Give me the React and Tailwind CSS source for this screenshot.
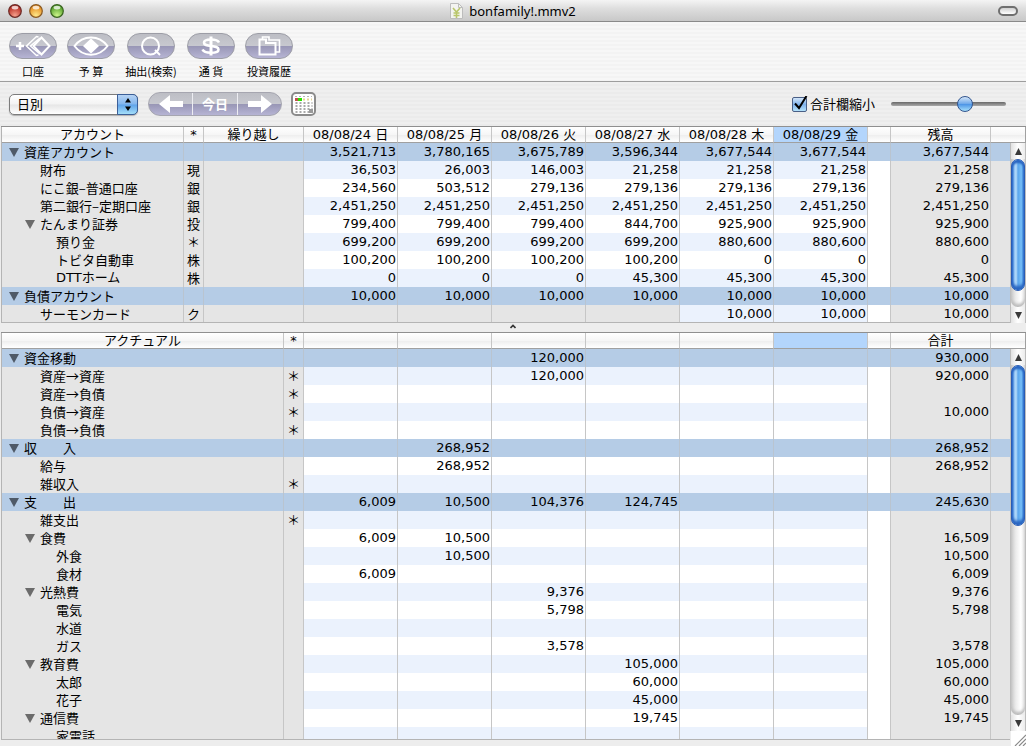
import React from 'react';

const JP = "font-['Noto_Sans_CJK_JP',sans-serif]";
const NUM = "font-['DejaVu_Sans','Noto_Sans_CJK_JP',sans-serif]";

const DATES = ['08/08/24 日', '08/08/25 月', '08/08/26 火', '08/08/27 水', '08/08/28 木', '08/08/29 金'];

const same = (v) => [v, v, v, v, v, v];

const ACCOUNTS = [
  { name: '資産アカウント', level: 0, head: true, v: ['3,521,713', '3,780,165', '3,675,789', '3,596,344', '3,677,544', '3,677,544'], total: '3,677,544' },
  { name: '財布', level: 1, mark: '現', v: ['36,503', '26,003', '146,003', '21,258', '21,258', '21,258'], total: '21,258' },
  { name: 'にこ銀–普通口座', level: 1, mark: '銀', v: ['234,560', '503,512', '279,136', '279,136', '279,136', '279,136'], total: '279,136' },
  { name: '第二銀行–定期口座', level: 1, mark: '銀', v: same('2,451,250'), total: '2,451,250' },
  { name: 'たんまり証券', level: 1, open: true, mark: '投', v: ['799,400', '799,400', '799,400', '844,700', '925,900', '925,900'], total: '925,900' },
  { name: '預り金', level: 2, mark: '＊', v: ['699,200', '699,200', '699,200', '699,200', '880,600', '880,600'], total: '880,600' },
  { name: 'トビタ自動車', level: 2, mark: '株', v: ['100,200', '100,200', '100,200', '100,200', '0', '0'], total: '0' },
  { name: 'DTTホーム', level: 2, mark: '株', latin: true, v: ['0', '0', '0', '45,300', '45,300', '45,300'], total: '45,300' },
  { name: '負債アカウント', level: 0, head: true, v: same('10,000'), total: '10,000' },
  { name: 'サーモンカード', level: 1, mark: 'ク', v: [null, null, null, null, '10,000', '10,000'], total: '10,000' },
];

const ACTUALS = [
  { name: '資金移動', level: 0, head: true, v: ['', '', '120,000', '', '', ''], total: '930,000' },
  { name: '資産→資産', level: 1, mark: '＊', v: ['', '', '120,000', '', '', ''], total: '920,000' },
  { name: '資産→負債', level: 1, mark: '＊', v: same(''), total: '' },
  { name: '負債→資産', level: 1, mark: '＊', v: same(''), total: '10,000' },
  { name: '負債→負債', level: 1, mark: '＊', v: same(''), total: '' },
  { name: '収\u3000\u3000入', level: 0, head: true, v: ['', '268,952', '', '', '', ''], total: '268,952' },
  { name: '給与', level: 1, v: ['', '268,952', '', '', '', ''], total: '268,952' },
  { name: '雑収入', level: 1, mark: '＊', v: same(''), total: '' },
  { name: '支\u3000\u3000出', level: 0, head: true, v: ['6,009', '10,500', '104,376', '124,745', '', ''], total: '245,630' },
  { name: '雑支出', level: 1, mark: '＊', v: same(''), total: '' },
  { name: '食費', level: 1, open: true, v: ['6,009', '10,500', '', '', '', ''], total: '16,509' },
  { name: '外食', level: 2, v: ['', '10,500', '', '', '', ''], total: '10,500' },
  { name: '食材', level: 2, v: ['6,009', '', '', '', '', ''], total: '6,009' },
  { name: '光熱費', level: 1, open: true, v: ['', '', '9,376', '', '', ''], total: '9,376' },
  { name: '電気', level: 2, v: ['', '', '5,798', '', '', ''], total: '5,798' },
  { name: '水道', level: 2, v: same(''), total: '' },
  { name: 'ガス', level: 2, v: ['', '', '3,578', '', '', ''], total: '3,578' },
  { name: '教育費', level: 1, open: true, v: ['', '', '', '105,000', '', ''], total: '105,000' },
  { name: '太郎', level: 2, v: ['', '', '', '60,000', '', ''], total: '60,000' },
  { name: '花子', level: 2, v: ['', '', '', '45,000', '', ''], total: '45,000' },
  { name: '通信費', level: 1, open: true, v: ['', '', '', '19,745', '', ''], total: '19,745' },
  { name: '家電話', level: 2, v: same(''), total: '' },
];

const INDENT = ['pl-[6px]', 'pl-[22px]', 'pl-[38px]'];
const CAP = 'bg-[linear-gradient(#ffffff,#f6f6f6_50%,#ededed_52%,#ffffff)]';
const LINE = 'border-r border-r-[#c6c6c6]';

function HeadCell({ children, on, end }) {
  return (
    <th
      scope="col"
      className={`h-4 whitespace-nowrap border-b border-b-[#a0a0a0] p-0 text-center font-normal leading-[15px] ${on ? 'bg-[#b3d5fc]' : CAP} ${end ? '' : LINE} ${NUM}`}
    >
      {children}
    </th>
  );
}

function Row({ row, index, carry }) {
  const line = row.head ? 'border-r border-r-[#b9c4d0]' : LINE;
  const side = row.head ? 'bg-[#b5cce6]' : 'bg-[#e5e5e5]';
  const cell = row.head ? 'bg-[#b5cce6]' : index % 2 ? 'bg-[#ebf2fd]' : 'bg-white';
  const fold = row.head || row.open;
  const num = `h-[18px] whitespace-nowrap p-0 pr-px text-right leading-[18px] ${NUM}`;
  return (
    <tr>
      <th scope="row" className={`h-[18px] p-0 text-left font-normal ${line} ${side}`}>
        <div className={`flex h-[18px] items-center whitespace-nowrap leading-[18px] ${row.latin ? NUM : JP} ${INDENT[row.level]}`}>
          <span className="flex w-4 shrink-0">
            {fold && (
              <button type="button" aria-label={`${row.name}を閉じる`} className="flex h-3 w-3 items-center justify-center">
                <svg width="10" height="10" viewBox="0 0 10 10" className={row.head ? 'fill-[#4f5a68]' : 'fill-[#6b6b6b]'}>
                  <path d="M0 1h10L5 10z" />
                </svg>
              </button>
            )}
          </span>
          {row.name}
        </div>
      </th>
      <td className={`h-[18px] p-0 text-center leading-[18px] ${line} ${side} ${JP}`}>{row.mark}</td>
      {carry && <td className={`${line} ${side}`} />}
      {row.v.map((v, i) => (
        <td key={i} className={`${num} ${line} ${v === null ? side : cell}`}>{v}</td>
      ))}
      <td className={`${line} ${row.head ? side : 'bg-white'}`} />
      <td className={`${num} ${line} ${side}`}>{row.total}</td>
      <td className={side} />
    </tr>
  );
}

function Ledger({ title, rows, dates, carry, total }) {
  return (
    <table className="w-full table-fixed border-separate border-spacing-0 text-[13px]">
      <colgroup>
        <col />
        <col className="w-5" />
        {carry && <col className="w-[100px]" />}
        {dates.map((_, i) => <col key={i} className="w-[94px]" />)}
        <col className="w-[23px]" />
        <col className="w-[100px]" />
        <col className="w-[19px]" />
      </colgroup>
      <thead>
        <tr>
          <HeadCell>{title}</HeadCell>
          <HeadCell>*</HeadCell>
          {carry && <HeadCell>繰り越し</HeadCell>}
          {dates.map((d, i) => <HeadCell key={i} on={i === 5}>{d}</HeadCell>)}
          <HeadCell />
          <HeadCell>{total}</HeadCell>
          <HeadCell end />
        </tr>
      </thead>
      <tbody>
        {rows.map((r, i) => <Row key={i} row={r} index={i} carry={carry} />)}
      </tbody>
    </table>
  );
}

function ArrowButton({ up }) {
  return (
    <button type="button" aria-label={up ? '上へ' : '下へ'} className="flex h-4 w-full shrink-0 items-center justify-center bg-[linear-gradient(90deg,#e2e2e2,#ffffff_50%,#ececec)]">
      <svg width="7" height="7" viewBox="0 0 7 7" className="fill-[#3a3a3a]">
        <path d={up ? 'M0 7h7L3.500 0z' : 'M0 0h7L3.500 7z'} />
      </svg>
    </button>
  );
}

function ScrollColumn({ thumb, className }) {
  return (
    <div className={`flex w-4 shrink-0 flex-col ${className}`}>
      <div className={`h-4 shrink-0 border-b border-r border-b-[#a0a0a0] border-r-[#a0a0a0] ${CAP}`} />
      <div className="flex min-h-0 flex-1 flex-col border-x border-x-[#bdbdbd]">
        <ArrowButton up />
        <div className="flex min-h-0 flex-1 flex-col rounded-b-full bg-[linear-gradient(90deg,#c9c9c9,#ececec_35%,#ffffff_70%,#e4e4e4)] shadow-[inset_0_-3px_3px_#bdbdbd]">
          <div className={`w-full rounded-full border border-[#2a5cb4] bg-[linear-gradient(90deg,#2f6fd4,#9fcdf7_22%,#b4dafa_34%,#5ba5ec_50%,#78c0f7_78%,#3a80da)] shadow-[inset_0_3px_2px_#2a66c2,inset_0_-4px_3px_#2a66c2] ${thumb}`} />
        </div>
        <ArrowButton />
      </div>
    </div>
  );
}

function ToolItem({ label, width, children }) {
  return (
    <button type="button" className={`flex flex-col items-center ${width}`}>
      <span className="flex h-[26px] w-12 rounded-[13px] border border-[#9c9da6] bg-[linear-gradient(#bdbec5,#c7c8cf_48%,#9997b6_52%,#b6b4d4)]">
        <svg width="46" height="24" viewBox="1 1 46 24" fill="none" stroke="#fff" strokeWidth="2">
          {children}
        </svg>
      </span>
      <span className={`mt-1 whitespace-pre text-[11px] leading-4 ${JP}`}>{label}</span>
    </button>
  );
}

function Light({ id, from, to, ring, label }) {
  return (
    <button type="button" aria-label={label} className="flex">
      <svg width="14" height="14" viewBox="0 0 14 14">
        <defs>
          <radialGradient id={id} cx="50%" cy="85%" r="75%">
            <stop offset="0" stopColor={from} />
            <stop offset="1" stopColor={to} />
          </radialGradient>
        </defs>
        <circle cx="7" cy="7" r="6.300" fill={`url(#${id})`} stroke={ring} strokeWidth="1.200" />
        <ellipse cx="7" cy="3.600" rx="3.400" ry="1.900" fill="#fff" opacity=".75" />
      </svg>
    </button>
  );
}

export default function App() {
  return (
    <div className={`relative flex h-screen flex-col overflow-hidden bg-[#ededed] text-black ${JP}`}>
      <header className="grid h-[22px] shrink-0 grid-cols-[1fr_auto_1fr] items-center border-b border-[#8a8a8a] bg-[linear-gradient(#f4f4f4,#dedede_40%,#c8c8c8)] px-2">
        <div className="flex gap-[7px]">
          <Light id="l1" label="閉じる" from="#f5a08c" to="#b5251c" ring="#6b2a26" />
          <Light id="l2" label="しまう" from="#ffe98a" to="#e58a1c" ring="#8a5a22" />
          <Light id="l3" label="拡大" from="#cdf58a" to="#4d9b26" ring="#3a6420" />
        </div>
        <h1 className="flex items-center gap-[6px] font-['Noto_Sans',sans-serif] text-[13px] leading-5">
          <svg width="13" height="16" viewBox="0 0 13 16">
            <path d="M.5.5h8l4 4v11H.5z" fill="#f3f3f0" stroke="#bcbcbc" />
            <path d="M8.500.5v4h4" fill="none" stroke="#bcbcbc" />
            <path d="M3 5l3.500 4L10 5M6.500 9v6M3.500 10h6M3.500 12.500h6" fill="none" stroke="#b9c66a" strokeWidth="1.600" />
          </svg>
          bonfamily!.mmv2
        </h1>
        <button type="button" aria-label="ツールバーを隠す" className="h-[10px] w-5 justify-self-end rounded-full border-2 border-[#6f6f6f] bg-[linear-gradient(#d0d0d0,#ffffff)]" />
      </header>

      <nav className="flex h-[60px] shrink-0 items-start gap-[10px] border-b border-[#9d9d9d] bg-[repeating-linear-gradient(#f7f7f7_0_2px,#f3f3f3_2px_4px)] pl-[9px] pt-[11px]">
        <ToolItem label="口座" width="w-12">
          <path d="M7 13h8M11 9v8" strokeWidth="2.500" />
          <path d="M32.500 4.500l8 8.500-8 8.500-8-8.500z" />
          <path d="M29.500 4l-2-.5L17.500 13l10 9.500 2-.5M31 5l-9.500 8 9.500 8" strokeWidth="1.500" />
        </ToolItem>
        <ToolItem label="予 算" width="w-12">
          <path d="M7.500 13C16 1.500 32 1.500 40.500 13 32 24.500 16 24.500 7.500 13z" />
          <path d="M24 5.500l8 7.500-8 7.500-8-7.500z" fill="#fff" stroke="none" />
        </ToolItem>
        <ToolItem label="抽出(検索)" width="w-[52px]">
          <circle cx="23.500" cy="13" r="8.500" />
          <path d="M28 17l5 5" />
        </ToolItem>
        <ToolItem label="通 貨" width="w-12">
          <path d="M32 9.500C31 7.500 28 6.500 24 6.500c-4.500 0-7 1-7 3.200s2.500 2.700 7 3.300 7.500 1.100 7.500 3.500-3 3.300-7.500 3.300c-4.500 0-7.500-1-8.500-3.300" strokeWidth="2.600" />
          <path d="M24 3.500v19" strokeWidth="3" />
        </ToolItem>
        <ToolItem label="投資履歴" width="w-12">
          <path d="M14.500 21.500V6.500h6.500v3.500h9.500v11.500z" />
          <path d="M17.500 6V4h6.500v3h10.500v12h-3.500" strokeWidth="1.600" />
        </ToolItem>
      </nav>

      <div className="flex h-11 shrink-0 items-center justify-between bg-[repeating-linear-gradient(#efefef_0_2px,#ebebeb_2px_4px)] pl-[9px] pr-5">
        <div className="flex items-center">
          <div className="relative flex h-[21px] w-[129px]">
            <select aria-label="表示単位" defaultValue="day" className={`h-full w-full appearance-none rounded-[5px] border border-[#7c7c7c] bg-[linear-gradient(#ffffff,#f3f3f3_48%,#e6e6e6_52%,#ffffff)] pl-[7px] pr-6 text-[13px] leading-[18px] shadow-[0_1px_1px_#b0b0b0] ${JP}`}>
              <option value="day">日別</option>
              <option value="week">週別</option>
              <option value="month">月別</option>
            </select>
            <span className="pointer-events-none absolute inset-y-0 right-0 flex w-[21px] items-center justify-center rounded-r-[5px] border border-[#3c5f98] bg-[linear-gradient(#b6d3f4,#83b6ee_48%,#5fa3ea_52%,#a4def9)]">
              <svg width="6" height="13" viewBox="0 0 6 13"><path d="M0 4.500h6L3 0zM0 8.500h6L3 13z" /></svg>
            </span>
          </div>
          <div className="ml-[10px] flex h-6 w-[134px] overflow-hidden rounded-full border border-[#a6a6b0] bg-[linear-gradient(#bdbec5,#c7c8cf_48%,#9997b6_52%,#b6b4d4)]">
            <button type="button" aria-label="前へ" className="flex flex-1 items-center justify-center">
              <svg width="24" height="18" viewBox="0 0 24 18" fill="#fff"><path d="M0 9L11 0v6h13v6H11v6z" /></svg>
            </button>
            <button type="button" className="w-[46px] border-x border-[#ededf2] text-[13px] font-bold leading-[22px] text-white">今日</button>
            <button type="button" aria-label="次へ" className="flex flex-1 items-center justify-center">
              <svg width="24" height="18" viewBox="0 0 24 18" fill="#fff"><path d="M24 9L13 0v6H0v6h13v6z" /></svg>
            </button>
          </div>
          <button type="button" aria-label="カレンダー" className="ml-[9px] flex h-6 w-[25px] items-center justify-center rounded-[5px] border-2 border-[#8b8b8b] bg-white">
            <svg width="19" height="18" viewBox="0 0 19 18">
              <path d="M1 1.500h17" stroke="#b5b5b5" strokeDasharray="2 2" />
              <rect x="1" y="3" width="3" height="3" fill="#c0504d" />
              <rect x="4" y="3" width="4" height="3" fill="#2be000" />
              <path d="M9 4.500h9" stroke="#e6d690" strokeWidth="2" strokeDasharray="2 2" />
              <path d="M1.500 8h17M1.500 11h17M1.500 14h17M1.500 17h17" stroke="#8d8d8d" strokeWidth="1.600" strokeDasharray="2 2" />
              <rect x="15" y="14" width="4" height="4" fill="#9a9a9a" />
            </svg>
          </button>
        </div>
        <div className="flex items-center">
          <span className="relative flex h-[15px] w-[15px]">
            <input id="compact" type="checkbox" defaultChecked className="peer h-[15px] w-[15px] appearance-none rounded-[2px] border border-[#4a5f86] bg-[linear-gradient(#d3e6fa,#7fb2ec_50%,#b4e2fb)]" />
            <svg width="16" height="16" viewBox="0 0 16 16" className="pointer-events-none absolute -top-px left-0 hidden fill-none stroke-black stroke-2 peer-checked:block">
              <path d="M3 7.500l4 4.500L14.500 0" />
            </svg>
          </span>
          <label htmlFor="compact" className="ml-[3px] text-[13px] leading-4">合計欄縮小</label>
          <input
            type="range"
            aria-label="列の幅"
            defaultValue="67"
            className="ml-4 h-4 w-[115px] appearance-none bg-transparent [&::-webkit-slider-runnable-track]:h-1 [&::-webkit-slider-runnable-track]:rounded-full [&::-webkit-slider-runnable-track]:bg-[linear-gradient(#686868,#a9a9a9)] [&::-webkit-slider-thumb]:-mt-[6px] [&::-webkit-slider-thumb]:h-4 [&::-webkit-slider-thumb]:w-4 [&::-webkit-slider-thumb]:appearance-none [&::-webkit-slider-thumb]:rounded-full [&::-webkit-slider-thumb]:border [&::-webkit-slider-thumb]:border-[#33568f] [&::-webkit-slider-thumb]:bg-[linear-gradient(#d5e6f8,#6fa9ea_48%,#4c94e6_52%,#a6e0fb)]"
          />
        </div>
      </div>

      <section className="ml-px flex h-[197px] shrink-0 border-t border-[#8f8f8f]">
        <div className="min-w-0 flex-1 overflow-hidden border-b border-l border-[#b4b4b4]">
          <Ledger title="アカウント" rows={ACCOUNTS} dates={DATES} carry total="残高" />
        </div>
        <ScrollColumn thumb="h-[89%]" className="" />
      </section>

      <div className="flex h-[9px] shrink-0 justify-center">
        <svg width="6" height="9" viewBox="0 0 6 9"><path d="M.5 5L3 2.500 5.500 5" fill="none" stroke="#333" strokeWidth="1.600" /></svg>
      </div>

      <section className="ml-px flex min-h-0 flex-1 border-t border-[#8f8f8f]">
        <div className="min-w-0 flex-1 overflow-hidden border-b border-l border-[#b4b4b4]">
          <Ledger title="アクチュアル" rows={ACTUALS} dates={same('')} total="合計" />
        </div>
        <ScrollColumn thumb="h-[46%]" className="mb-[9px]" />
      </section>

      <footer className="h-[6px] shrink-0" />
      <svg width="15" height="15" viewBox="0 0 15 15" className="absolute bottom-0 right-0 bg-white">
        <path d="M4 15L15 4M8 15l7-7M12 15l3-3" stroke="#8a8a8a" strokeWidth="1.200" />
      </svg>
    </div>
  );
}
